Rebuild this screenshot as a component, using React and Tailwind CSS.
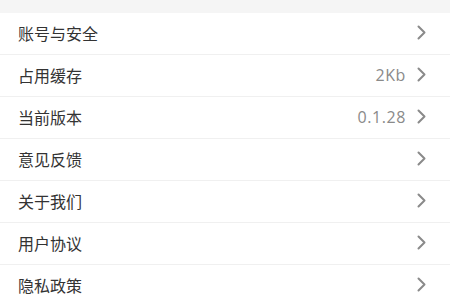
const items = [
  { title: "账号与安全" },
  { title: "占用缓存", value: "2Kb" },
  { title: "当前版本", value: "0.1.28" },
  { title: "意见反馈" },
  { title: "关于我们" },
  { title: "用户协议" },
  { title: "隐私政策" },
];

const Chevron = () => (
  <svg width="9" height="15" viewBox="0 0 9 15" fill="none" className="shrink-0">
    <path d="M1.5 1.5 L7.5 7.5 L1.5 13.5" stroke="#8a8a8a" strokeWidth="2" strokeLinecap="round" strokeLinejoin="round" />
  </svg>
);

export default function App() {
  return (
    <div
      className="w-[450px] h-[300px] overflow-hidden bg-[#f5f5f5] pt-[13px]"
      style={{ fontFamily: '"Noto Sans CJK SC", "Noto Sans", sans-serif' }}
    >
      <div className="bg-white">
        {items.map((it) => (
          <div
            key={it.title}
            className="h-[42px] flex items-center pl-[18px] pr-[24px] pb-[2px] border-b border-[#f0f0f0]"
          >
            <span className="flex-1 text-[16px] text-[#333333] leading-none">{it.title}</span>
            {it.value && (
              <span className="font-['Open_Sans',sans-serif] text-[16px] tracking-[0.6px] text-[#8a8a8a] leading-none mr-[11px]">
                {it.value}
              </span>
            )}
            <Chevron />
          </div>
        ))}
      </div>
    </div>
  );
}
